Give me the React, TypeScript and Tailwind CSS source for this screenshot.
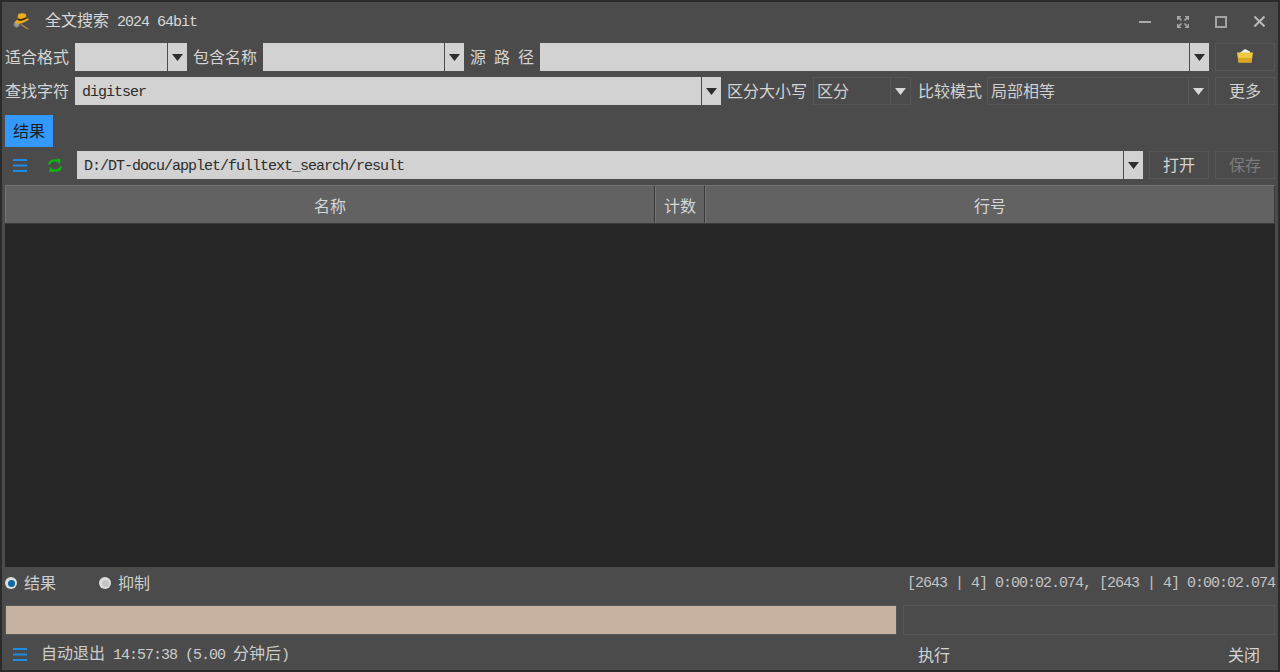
import React from "react";

// latin runs of the old bitmap font are 8px per char
const Mono: React.FC<{ children: React.ReactNode }> = ({ children }) => (
  <span className="font-['Liberation_Mono',monospace] text-[15px] tracking-[-1px] whitespace-pre">{children}</span>
);

const Arrow: React.FC<{ light?: boolean }> = ({ light }) => (
  <svg width="11" height="7" viewBox="0 0 11 7">
    <path d="M0 0H11L5.5 7Z" fill={light ? "#d8d8d8" : "#2e2e2e"} />
  </svg>
);

const Label: React.FC<{ children: React.ReactNode; className?: string }> = ({ children, className }) => (
  <span className={`shrink-0 whitespace-nowrap text-[#d4d4d4] leading-[26px] ${className ?? "w-16"}`}>{children}</span>
);

const Combo: React.FC<{ value?: string; className: string }> = ({ value, className }) => (
  <div className={`flex h-7 bg-[#d2d2d2] text-[#2c2c2c] ${className}`}>
    <div className="flex-1 pl-[7px] leading-[24px] truncate">{value ? <Mono>{value}</Mono> : null}</div>
    <div className="flex w-[20px] items-center justify-center border-l border-[#4b4b4b]">
      <Arrow />
    </div>
  </div>
);

const FlatCombo: React.FC<{ value: string; className: string }> = ({ value, className }) => (
  <div className={`flex h-7 border border-[#565656] text-[#cfcfcf] ${className}`}>
    <div className="flex-1 pl-[3px] leading-[24px]">{value}</div>
    <div className="flex w-[20px] items-center justify-center border-l border-[#565656]">
      <Arrow light />
    </div>
  </div>
);

const Btn: React.FC<{ children?: React.ReactNode; disabled?: boolean }> = ({ children, disabled }) => (
  <div
    className={`flex h-7 w-[60px] shrink-0 items-center justify-center border border-[#565656] pb-[2px] ${
      disabled ? "text-[#7c7c7c]" : "text-[#d4d4d4]"
    }`}
  >
    {children}
  </div>
);

const MenuIcon = () => (
  <svg width="14" height="13" viewBox="0 0 14 13" className="shrink-0">
    <path d="M0 1H14M0 6.5H14M0 12H14" stroke="#1e8be6" strokeWidth="2" />
  </svg>
);

const HatIcon = () => (
  <svg width="17" height="17" viewBox="0 0 17 17">
    <path d="M15 16L8 11.5" stroke="#c08a45" strokeWidth="1.2" />
    <circle cx="3.6" cy="11.5" r="2.8" fill="#9a9a9a" stroke="#707070" />
    <path d="M1.5 9.5C5 12 11 10.5 16.5 6L13.5 5.5L13 1.5C11 -0.2 7 0.2 5 1.5L4.5 6Z" fill="#eeaa1e" />
    <path d="M4.2 7C7 8.6 11 7.6 13.6 5.6L13.3 3.8C11 6 7 6.6 4.6 5.2Z" fill="#33260f" />
  </svg>
);

const SyncIcon = () => (
  <svg width="16" height="15" viewBox="0 0 16 15" className="ml-[20px] shrink-0">
    <path d="M2 6.5C2.6 3.2 6.8 1 10.6 3.4" fill="none" stroke="#10b510" strokeWidth="2.4" />
    <path d="M9 0.5L14 1.5L12.4 6.4Z" fill="#10b510" />
    <path d="M14 8.5C13.4 11.8 9.2 14 5.4 11.6" fill="none" stroke="#10b510" strokeWidth="2.4" />
    <path d="M7 14.5L2 13.5L3.6 8.6Z" fill="#10b510" />
  </svg>
);

const FolderIcon = () => (
  <svg width="16" height="14" viewBox="0 0 16 14">
    <path d="M2.5 4L8 0L13 2.5V4Z" fill="#ececec" />
    <path d="M0 3.5H16L14.5 13.5H1.5Z" fill="#efc843" />
    <path d="M1 9H15.2L14.5 13.5H1.5Z" fill="#d8a524" />
  </svg>
);

const WinButton: React.FC<{ children: React.ReactNode }> = ({ children }) => (
  <div className="flex h-full w-[38px] items-center justify-center">{children}</div>
);

const HeaderCell: React.FC<{ label: string; className: string }> = ({ label, className }) => (
  <div
    className={`flex items-center justify-center border-l border-t border-[#747474] border-r-[#3a3a3a] border-r bg-[#626262] text-[#d6d6d6] ${className}`}
  >
    {label}
  </div>
);

const Radio: React.FC<{ on?: boolean }> = ({ on }) => (
  <span className="flex h-3 w-3 shrink-0 items-center justify-center rounded-full bg-[#dedede]">
    <span className={`h-[7px] w-[7px] rounded-full ${on ? "bg-[#0c6aa8]" : "bg-[#c4c4c4]"}`} />
  </span>
);

export default function App() {
  return (
    <div className="flex h-[672px] w-[1280px] flex-col overflow-hidden border-2 border-[#2b2b2b] bg-[#4b4b4b] font-['Noto_Sans_CJK_SC','Liberation_Sans',sans-serif] text-[16px] text-[#d4d4d4]">
      {/* Title bar */}
      <div className="mb-[2px] flex h-[39px] shrink-0 items-center">
        <div className="ml-[11px] flex w-[32px] shrink-0">
          <HatIcon />
        </div>
        <div className="mb-[2px] flex-1 text-[#d8d8d8]">
          全文搜索<Mono> 2024 64bit</Mono>
        </div>
        <WinButton>
          <svg width="12" height="2" viewBox="0 0 12 2">
            <path d="M0 1H12" stroke="#ababab" strokeWidth="2" />
          </svg>
        </WinButton>
        <WinButton>
          <svg width="12" height="12" viewBox="0 0 12 12" fill="none" stroke="#a8a8a8" strokeWidth="1.7">
            <path d="M0.5 4V0.5H4M8 0.5H11.5V4M11.5 8V11.5H8M4 11.5H0.5V8M1 1L4.5 4.5M11 1L7.5 4.5M11 11L7.5 7.5M1 11L4.5 7.5" />
          </svg>
        </WinButton>
        <WinButton>
          <svg width="12" height="12" viewBox="0 0 12 12" fill="none">
            <rect x="1" y="1" width="10" height="10" stroke="#a3a3a3" strokeWidth="2" />
          </svg>
        </WinButton>
        <WinButton>
          <svg width="11" height="11" viewBox="0 0 11 11">
            <path d="M0.5 0.5L10.5 10.5M10.5 0.5L0.5 10.5" stroke="#b9b9b9" strokeWidth="2" />
          </svg>
        </WinButton>
      </div>

      <div className="flex flex-1 flex-col px-[3px]">
        {/* Filters */}
        <div className="flex gap-[6px]">
          <Label>适合格式</Label>
          <Combo className="w-[112px]" />
          <Label>包含名称</Label>
          <Combo className="w-[201px]" />
          <Label className="flex w-16 gap-2">
            <span>源</span>
            <span>路</span>
            <span>径</span>
          </Label>
          <Combo className="flex-1" />
          <Btn>
            <FolderIcon />
          </Btn>
        </div>

        <div className="mt-[6px] flex gap-[6px]">
          <Label>查找字符</Label>
          <Combo className="w-[646px]" value="digitser" />
          <Label className="w-20">区分大小写</Label>
          <FlatCombo className="w-[98px]" value="区分" />
          <Label className="ml-px w-[63px]">比较模式</Label>
          <FlatCombo className="flex-1" value="局部相等" />
          <Btn>更多</Btn>
        </div>

        {/* Tab */}
        <div className="mt-[10px] flex h-8 w-12 items-center justify-center bg-[#3399ff] pb-[2px] text-[#1d1d1d]">结果</div>

        {/* Result path */}
        <div className="mt-1 flex items-center gap-[6px]">
          <div className="flex w-[66px] shrink-0 items-center pl-2">
            <MenuIcon />
            <SyncIcon />
          </div>
          <Combo className="flex-1" value="D:/DT-docu/applet/fulltext_search/result" />
          <Btn>打开</Btn>
          <Btn disabled>保存</Btn>
        </div>

        {/* Table */}
        <div className="mt-[6px] flex h-[382px] flex-col bg-[#272727]">
          <div className="flex h-[39px] shrink-0 border-b border-[#3a3a3a]">
            <HeaderCell label="名称" className="w-[650px]" />
            <HeaderCell label="计数" className="w-[50px]" />
            <HeaderCell label="行号" className="flex-1" />
          </div>
        </div>

        {/* Options and timings */}
        <div className="flex h-[32px] shrink-0 items-center">
          <Radio on />
          <span className="mb-[2px] ml-[7px] w-[75px] text-[#cfcfcf]">结果</span>
          <Radio />
          <span className="mb-[2px] ml-[7px] flex-1 text-[#cfcfcf]">抑制</span>
          <span className="mb-[2px] text-[#c4c4c4]">
            <Mono>[2643 | 4] 0:00:02.074, [2643 | 4] 0:00:02.074</Mono>
          </span>
        </div>

        {/* Progress */}
        <div className="mt-[6px] flex h-[30px] shrink-0 gap-[6px]">
          <div className="w-[892px] border border-[#565656] bg-[#c7b29f]" />
          <div className="flex-1 border border-[#565656]" />
        </div>

        {/* Footer */}
        <div className="flex flex-1 items-center pt-[2px]">
          <div className="ml-2 mt-[2px] w-[28px] shrink-0">
            <MenuIcon />
          </div>
          <span className="flex-1 text-[#cdcdcd]">
            自动退出<Mono> 14:57:38 (5.00 </Mono>分钟后<Mono>)</Mono>
          </span>
          <span className="w-[60px] text-center text-[#d4d4d4]">执行</span>
          <span className="ml-[250px] w-[60px] text-center text-[#d4d4d4]">关闭</span>
          <span className="w-px shrink-0" />
        </div>
      </div>
    </div>
  );
}
